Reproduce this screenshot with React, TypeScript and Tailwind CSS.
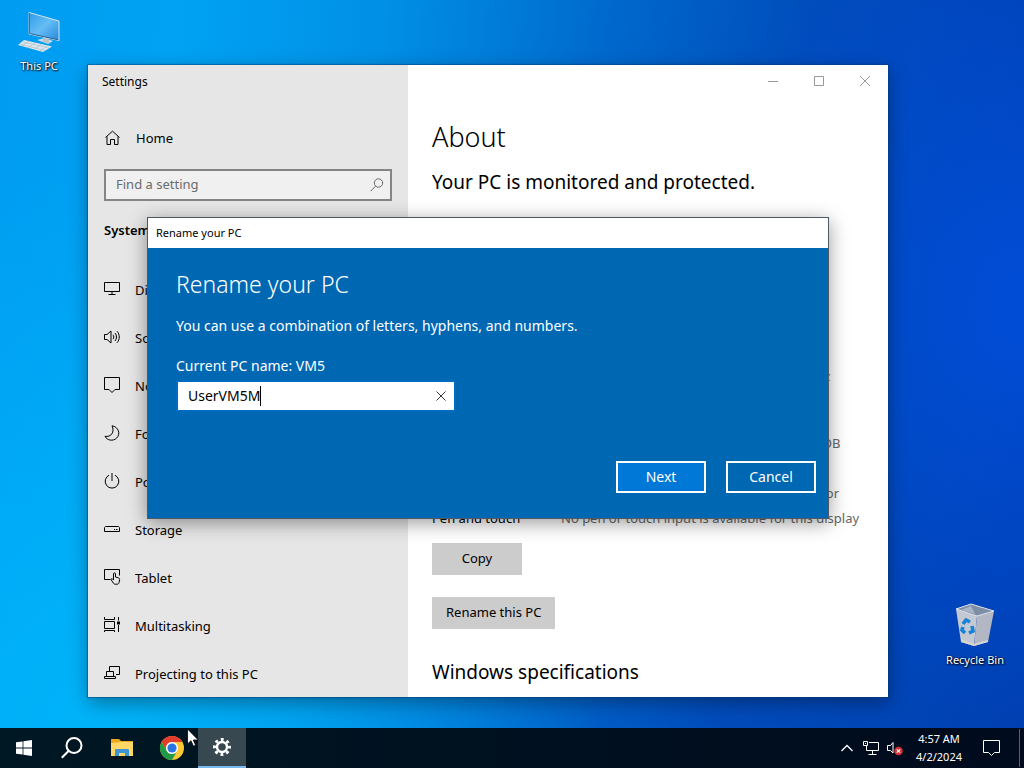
import React, { useState } from 'react';

interface NavItem {
  label: string;
  icon: React.ReactNode;
}

const Icon: React.FC<{ children: React.ReactNode }> = ({ children }) => (
  <svg
    width="16"
    height="16"
    viewBox="0 0 16 16"
    fill="none"
    stroke="currentColor"
    strokeWidth="1"
    className="mb-1 shrink-0 overflow-visible"
    aria-hidden="true"
  >
    {children}
  </svg>
);

const navItems: NavItem[] = [
  {
    label: 'Display',
    icon: (
      <Icon>
        <path d="M.5 1.500h15v9H.5zM8 10.500v3M4.500 13.500h7" />
      </Icon>
    ),
  },
  {
    label: 'Sound',
    icon: (
      <Icon>
        <path d="M.5 5.500h2.500l4-3.500v12l-4-3.500H.5zM9 5.800c1 1.200 1 3.200 0 4.400M11 4c2 2.200 2 5.800 0 8M13 2.200c3 3.300 3 8.300 0 11.600" />
      </Icon>
    ),
  },
  {
    label: 'Notifications & actions',
    icon: (
      <Icon>
        <path d="M.5.500h15v12h-4.500l-3 3-3-3H.5z" />
      </Icon>
    ),
  },
  {
    label: 'Focus assist',
    icon: (
      <Icon>
        <path d="M8 .8c6.500 1 9 8.200 4.500 12.400C9 16.500 3 15.500 1 11.300 7 12.500 11 7 8 .8z" />
      </Icon>
    ),
  },
  {
    label: 'Power & sleep',
    icon: (
      <Icon>
        <path d="M8 0v8M5 2.200a6.800 6.800 0 1 0 6 0" />
      </Icon>
    ),
  },
  {
    label: 'Storage',
    icon: (
      <Icon>
        <path d="M1.500 5.500h13l1 1v4H.5v-4zM12 8.500h1.500M10 8.500h1" />
      </Icon>
    ),
  },
  {
    label: 'Tablet',
    icon: (
      <Icon>
        <path d="M6.500 10.500h-6v-10h15v6" />
        <path d="M9.500 11V4.800c0-1.300 2-1.300 2 0V8l3 .9c.8.200 1.200.8 1.100 1.600l-.6 3.200c-.2 1-1 1.500-2 1.500h-1.800c-.8 0-1.300-.3-1.800-1L7.200 10.800c-.5-.9.5-1.600 1.300-.9l1 1" />
      </Icon>
    ),
  },
  {
    label: 'Multitasking',
    icon: (
      <Icon>
        <path d="M.5 0v2.500h10V0M.5 4.500h10v7H.5zM.5 15v-1.500h10V15M14.500 0v3.500M14.500 8v7" />
        <path d="M13 4.500h3v3h-3z" fill="currentColor" stroke="none" />
      </Icon>
    ),
  },
  {
    label: 'Projecting to this PC',
    icon: (
      <Icon>
        <path d="M5.500 6V1.500h10v8H12M2.500 11V6.500h7V11M.5 11.500h11v2H.5z" />
      </Icon>
    ),
  },
];

const specs = [
  { name: 'Device name', value: 'VM5' },
  { name: 'Processor', value: 'Intel(R) Core(TM) i5-10400U CPU @ 1.80 GHz', tall: true },
  { name: 'Installed RAM', value: '4.00 GB' },
  { name: 'Device ID', value: '5DCBA642-93D0-4DAB-A6B8-D1CDA6DCB9DB' },
  { name: 'Product ID', value: '00330-80000-00000' },
  { name: 'System type', value: '64-bit operating system, x64-based processor' },
  { name: 'Pen and touch', value: 'No pen or touch input is available for this display' },
];

const Sidebar: React.FC = () => {
  const [query, setQuery] = useState('');

  return (
    <aside className="w-80 shrink-0 bg-[#e6e6e6]">
      <div className="flex h-[34px] items-center px-3.5 text-xs">Settings</div>

      <a href="#home" className="mt-4 flex h-12 items-center gap-4 px-4 text-[13px]">
        <svg width="16" height="16" viewBox="0 0 16 16" fill="none" stroke="currentColor" className="mb-0.5" aria-hidden="true">
          <path d="M1.500 7.500L8.500 1.200 15.500 7.500M3 6.500v8h3.500v-5h4v5H14v-8" />
        </svg>
        Home
      </a>

      <div className="mx-4 mt-1.5 flex h-8 items-center border-2 border-[#858585] bg-[#f0f0f0] pr-1.5 pl-2.5">
        <input
          type="text"
          aria-label="Find a setting"
          placeholder="Find a setting"
          value={query}
          onChange={(e) => setQuery(e.target.value)}
          className="min-w-0 flex-1 bg-transparent text-[13px] placeholder:text-[#6b6b6b] focus:outline-none"
        />
        <svg width="14" height="14" viewBox="0 0 14 14" fill="none" stroke="#6a6a6a" aria-hidden="true">
          <circle cx="8.500" cy="5" r="4.200" />
          <path d="M5.500 8.200L.6 13.200" />
        </svg>
      </div>

      <h2 className="mt-1.5 flex h-12 items-center px-4 text-[13px] font-semibold">System</h2>

      <nav className="mt-3">
        {navItems.map((item) => (
          <a key={item.label} href="#system" className="flex h-12 items-center gap-[15px] px-4 text-[13px]">
            {item.icon}
            {item.label}
          </a>
        ))}
      </nav>
    </aside>
  );
};

const SettingsWindow: React.FC = () => (
  <section className="absolute top-[65px] left-[88px] flex h-[632px] w-[800px] overflow-hidden bg-white text-black shadow-[0_0_1px_1px_rgba(0,60,110,0.45),0_6px_18px_rgba(0,0,0,0.35)]">
    <Sidebar />

    <div className="min-w-0 flex-1">
      <div className="flex h-8 justify-end text-[#999]">
        <button aria-label="Minimize" className="flex w-[46px] items-center justify-center">
          <svg width="10" height="10" viewBox="0 0 10 10" stroke="currentColor">
            <path d="M0 5.500h10" />
          </svg>
        </button>
        <button aria-label="Maximize" className="flex w-[46px] items-center justify-center">
          <svg width="10" height="10" viewBox="0 0 10 10" fill="none" stroke="currentColor">
            <path d="M.5.500h9v9h-9z" />
          </svg>
        </button>
        <button aria-label="Close" className="flex w-[46px] items-center justify-center">
          <svg width="10" height="10" viewBox="0 0 10 10" stroke="currentColor">
            <path d="M0 0l10 10M10 0L0 10" />
          </svg>
        </button>
      </div>

      <div className="px-6 pt-5">
        <h1 className="text-[27px] leading-10 font-light">About</h1>
        <h2 className="mt-[9px] text-[19px] leading-8">Your PC is monitored and protected.</h2>

        <table className="mt-[141px] w-full text-left text-[13px] whitespace-nowrap">
          <tbody>
            {specs.map((spec) => (
              <tr key={spec.name} className={spec.tall ? 'h-[42px] align-top leading-[25px]' : 'h-[25px]'}>
                <th scope="row" className="w-[129px] font-normal">{spec.name}</th>
                <td className="text-[#666]">{spec.value}</td>
              </tr>
            ))}
          </tbody>
        </table>

        <button className="mt-3 block h-8 w-[90px] bg-[#ccc] text-[13px]">Copy</button>
        <button className="mt-[22px] block h-8 bg-[#ccc] px-3.5 text-[13px]">Rename this PC</button>
        <h2 className="mt-[27px] text-[19px] leading-8">Windows specifications</h2>
      </div>
    </div>
  </section>
);

const RenameDialog: React.FC = () => {
  const [name, setName] = useState('UserVM5M');

  return (
    <section
      role="dialog"
      aria-labelledby="rename-title"
      className="absolute top-[217px] left-[147px] w-[682px] border border-[#4d5a66] bg-[#0067b3] text-white shadow-[0_4px_18px_rgba(0,0,0,0.4)]"
    >
      <div className="flex h-[30px] items-center bg-white px-2 text-[11px] text-black">Rename your PC</div>

      <form className="pr-3 pb-[25px] pl-7" onSubmit={(e) => e.preventDefault()}>
        <h1 id="rename-title" className="pt-5 text-[23px] leading-8 font-light">Rename your PC</h1>
        <p className="mt-4 text-sm leading-5">You can use a combination of letters, hyphens, and numbers.</p>
        <label htmlFor="pc-name" className="mt-5 block text-sm leading-5">Current PC name: VM5</label>

        <div className="mt-1 flex h-8 w-[280px] items-center border-2 border-[#006cc0] bg-white pr-2 pl-2.5 text-black">
          <input
            id="pc-name"
            type="text"
            value={name}
            onChange={(e) => setName(e.target.value)}
            className="field-sizing-content max-w-56 bg-transparent text-sm focus:outline-none"
          />
          <span className="h-5 w-px bg-black" />
          <button type="button" aria-label="Clear" onClick={() => setName('')} className="ml-auto">
            <svg width="10" height="10" viewBox="0 0 10 10" stroke="#333">
              <path d="M.5.500l9 9M9.500.500l-9 9" />
            </svg>
          </button>
        </div>

        <div className="mt-[49px] flex justify-end gap-5 text-sm">
          <button type="submit" className="h-8 w-[90px] border-2 border-white bg-[#0078d7]">Next</button>
          <button type="button" className="h-8 w-[90px] border-2 border-white">Cancel</button>
        </div>
      </form>
    </section>
  );
};

const DesktopIcons: React.FC = () => (
  <>
    <a
      href="#this-pc"
      className="absolute top-2.5 left-0 flex w-[78px] flex-col items-center text-[11px] leading-4 text-white [text-shadow:1px_1px_2px_black,0_0_2px_black]"
    >
      <svg width="48" height="48" viewBox="0 0 48 48" aria-hidden="true">
        <defs>
          <linearGradient id="screen" x1="0" y1="0" x2="1" y2="1">
            <stop offset="0" stopColor="#2f9be8" />
            <stop offset=".5" stopColor="#66bdf4" />
            <stop offset="1" stopColor="#2388dc" />
          </linearGradient>
        </defs>
        <path d="M22 30l8-2 8 3-5 3z" fill="#cfdbe4" />
        <path d="M28 26l6 1v6l-6-1z" fill="#b4c3cf" />
        <path d="M14 2.500L44 11v19.500L14 24z" fill="url(#screen)" stroke="#d7e4ec" strokeWidth="1" />
        <path d="M14.300 3v20.500L43 29.800" fill="none" stroke="#2a5f8c" strokeWidth="1" />
        <path d="M9 30l28 6.500-9 5.500-25-7z" fill="#dfe8ef" />
        <path d="M8 32l26 6M5 34l25 6.500M14 31l-7 5M20 33l-7 5M26 34.500l-7 5M32 36l-7 5" stroke="#a9bcc9" strokeWidth=".7" />
      </svg>
      This PC
    </a>

    <a
      href="#recycle-bin"
      className="absolute top-[602px] right-2.5 flex w-[78px] flex-col items-center text-[11px] leading-4 whitespace-nowrap text-white [text-shadow:1px_1px_2px_black,0_0_2px_black]"
    >
      <svg width="48" height="50" viewBox="0 0 48 50" aria-hidden="true">
        <path d="M5 7l21 7-3 30-13-4z" fill="#c3c8d2" />
        <path d="M43 9l-17 5-3 30 14-4z" fill="#b2b7c3" />
        <path d="M5 7l15-5 23 7-17 5z" fill="#7f8ea6" stroke="#dfe4ec" strokeWidth="1" />
        <path d="M10 8l10-4 4 8z" fill="#a9b5c6" />
        <path d="M10 37l13 5 14-4v2l-14 4-13-4z" fill="#d8d5d2" />
        <g fill="none" stroke="#1583d8" strokeWidth="3.600">
          <path d="M12 22l3-4 4 2" />
          <path d="M21 24l1 5-4 2" />
          <path d="M14 31l-3-3 1-3" />
        </g>
      </svg>
      Recycle Bin
    </a>
  </>
);

const Taskbar: React.FC = () => (
  <footer className="flex h-10 items-stretch justify-between bg-linear-to-r from-[#001824] via-[#00101f] to-[#000b1d] text-white">
    <div className="flex gap-0.5">
      <div className="flex">
        <button aria-label="Start" className="flex w-12 items-center justify-center">
          <svg width="16" height="16" viewBox="0 0 16 16" fill="white">
            <path d="M0 2.300L6.600 1.400v6.200H0zM7.400 1.300L16 0v7.600H7.400zM0 8.400h6.600v6.200L0 13.700zM7.400 8.400H16V16l-8.600-1.300z" />
          </svg>
        </button>
        <button aria-label="Search" className="flex w-12 items-center justify-center">
          <svg width="22" height="22" viewBox="0 0 22 22" fill="none" stroke="white" strokeWidth="2">
            <circle cx="13" cy="8.500" r="7.500" />
            <path d="M7.500 14L.8 20.800" />
          </svg>
        </button>
      </div>
      <button aria-label="File Explorer" className="flex w-12 items-center justify-center">
        <svg width="22" height="18" viewBox="0 0 22 18">
          <path d="M0 0h8l2 2h12v4H0z" fill="#e8a91c" />
          <path d="M0 4l10-1h12v14H0z" fill="#ffd766" />
          <path d="M4 17v-6q0-1 1-1h12q1 0 1 1v6h-4v-3H8v3z" fill="#3d96d3" />
        </svg>
      </button>
      <button aria-label="Google Chrome" className="flex w-12 items-center justify-center">
        <svg width="24" height="24" viewBox="0 0 24 24">
          <circle cx="12" cy="12" r="12" fill="#fcc934" />
          <path d="M1.600 6A12 12 0 0 1 22.400 6H12a6 6 0 0 0-5.200 9z" fill="#e33b2e" />
          <path d="M1.600 6A12 12 0 0 0 12 24l5.200-9a6 6 0 0 1-10.400 0z" fill="#1e9a48" />
          <circle cx="12" cy="12" r="6" fill="white" />
          <circle cx="12" cy="12" r="4.600" fill="#2b74e8" />
        </svg>
      </button>
      <button
        aria-label="Settings"
        className="flex w-12 items-center justify-center border-b-2 border-[#76b9ed] bg-[#374851]"
      >
        <svg width="18" height="18" viewBox="0 0 18 18" fill="none" stroke="white">
          <circle cx="9" cy="9" r="5" strokeWidth="2.400" />
          <circle cx="9" cy="9" r="7.500" strokeWidth="3" strokeDasharray="2.900 2.990" strokeDashoffset="1.450" />
        </svg>
      </button>
    </div>

    <div className="flex items-stretch">
      <button aria-label="Show hidden icons" className="flex w-6 items-center justify-center">
        <svg width="12" height="8" viewBox="0 0 12 8" fill="none" stroke="white" strokeWidth="1.300">
          <path d="M.5 7L6 1.500 11.500 7" />
        </svg>
      </button>
      <button aria-label="Network" className="flex w-6 items-center justify-center">
        <svg width="16" height="14" viewBox="0 0 16 14" fill="none" stroke="white">
          <path d="M6 1.500h9.500v8h-12V5M9.500 9.500v4M5.500 13.500h8M.5.500h4v4h-4zM2 2.500h1" />
        </svg>
      </button>
      <button aria-label="Volume muted" className="flex w-6 items-center justify-center">
        <svg width="16" height="16" viewBox="0 0 16 16" fill="none" stroke="white">
          <path d="M6 13L3.500 10.500H.5v-5h3L6 2.500z" />
          <circle cx="11.500" cy="11" r="4.300" fill="#d32f35" stroke="none" />
          <path d="M9.800 9.300l3.400 3.400M13.200 9.300l-3.400 3.400" strokeWidth="1.200" />
        </svg>
      </button>
      <button className="ml-1 flex w-14 flex-col items-center justify-center text-[11px] leading-[18px] whitespace-nowrap">
        <time>4:57 AM</time>
        <time>4/2/2024</time>
      </button>
      <button aria-label="Notifications" className="flex w-12 items-center justify-center">
        <svg width="17" height="16" viewBox="0 0 17 16" fill="none" stroke="white">
          <path d="M.5.500h16v12h-5l-3 3-3-3h-5z" />
        </svg>
      </button>
      <button aria-label="Show desktop" className="my-px ml-1 w-[5px] border-l border-[#56616e]" />
    </div>
  </footer>
);

export default function App() {
  return (
    <div className="relative flex min-h-screen flex-col overflow-hidden bg-[radial-gradient(ellipse_320px_420px_at_100%_40%,rgba(0,80,225,0.75),transparent),radial-gradient(ellipse_520px_560px_at_8%_95%,rgba(0,184,250,0.8),transparent),linear-gradient(98deg,#009cf2_0%,#00a2f4_16%,#0090e6_34%,#0069cd_54%,#004cbc_72%,#003fb2_100%)] font-['Noto_Sans','Open_Sans',sans-serif]">
      <main className="relative flex-1">
        <DesktopIcons />
        <SettingsWindow />
        <RenameDialog />
      </main>
      <Taskbar />

      {/* Mouse pointer */}
      <svg
        className="pointer-events-none absolute bottom-[21px] left-[187px]"
        width="12"
        height="19"
        viewBox="0 0 12 19"
        fill="white"
        stroke="black"
        strokeWidth=".8"
        aria-hidden="true"
      >
        <path d="M.5 1v15l3.500-3.300 2.400 5.500 2.200-1L6.300 12h5z" />
      </svg>
    </div>
  );
}
